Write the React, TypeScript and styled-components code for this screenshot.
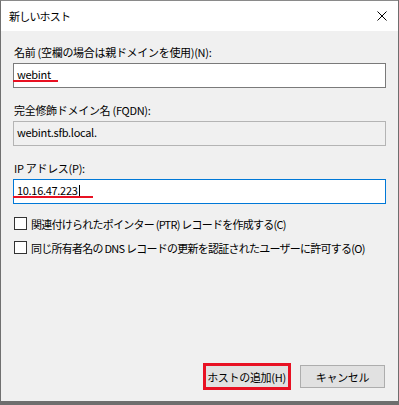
import React from "react";
import styled, { createGlobalStyle } from "styled-components";

const GlobalStyle = createGlobalStyle`
  html, body {
    margin: 0;
    padding: 0;
    background: #6e6e6e;
  }
  body {
    font-family: "Noto Sans CJK JP", "Noto Sans", sans-serif;
    font-size: 11px;
    letter-spacing: -0.3px;
    color: #000;
  }
`;

const Window = styled.div`
  box-sizing: border-box;
  width: 398px;
  height: 401px;
  border-left: 1px solid #707070;
  border-top: 1px solid #8a8a8a;
  display: flex;
  flex-direction: column;
  background: #f0f0f0;
`;

const TitleBar = styled.div`
  height: 30px;
  background: #fff;
  display: flex;
  align-items: center;
  justify-content: space-between;
  padding: 0 11px 0 8px;
  flex-shrink: 0;
`;

const Title = styled.span`
  font-size: 11px;
  letter-spacing: -0.8px;
  line-height: 16px;
`;

const Body = styled.div`
  flex: 1;
  display: flex;
  flex-direction: column;
  padding: 13px 12px 13px 12px;
`;

const Label = styled.div`
  line-height: 16px;
  height: 16px;
  padding-left: 1px;
  white-space: nowrap;
`;

const Field = styled.div<{ $variant?: "normal" | "readonly" | "focus"; $gap: number }>`
  position: relative;
  box-sizing: border-box;
  height: 25px;
  margin: 3px 0 ${(p) => p.$gap}px;
  border: 1px solid
    ${(p) =>
      p.$variant === "readonly" ? "#b4b4b4" : p.$variant === "focus" ? "#0078d7" : "#7a7a7a"};
  background: ${(p) => (p.$variant === "readonly" ? "#f0f0f0" : "#fff")};
  display: flex;
  align-items: center;
  padding: 0 0 3px 3px;
  white-space: nowrap;
`;

const Caret = styled.span`
  display: inline-block;
  width: 1px;
  height: 12px;
  background: #000;
  margin: 2px 0 0 1px;
`;

const RedLine = styled.div<{ $width: number }>`
  position: absolute;
  left: -1px;
  bottom: 5px;
  width: ${(p) => p.$width}px;
  height: 2px;
  background: #e81123;
`;

const CheckRow = styled.label<{ $gap: number }>`
  display: flex;
  align-items: center;
  gap: 4px;
  height: 13px;
  margin-bottom: ${(p) => p.$gap}px;
  padding-left: 1px;
  white-space: nowrap;
  letter-spacing: -0.75px;
`;

const Box = styled.span`
  box-sizing: border-box;
  width: 13px;
  height: 13px;
  border: 1px solid #333;
  background: #fff;
  flex-shrink: 0;
`;

const Buttons = styled.div`
  margin-top: auto;
  display: flex;
  justify-content: flex-end;
  gap: 11px;
  padding-right: 1px;
`;

const ButtonWrap = styled.div`
  position: relative;
`;

const Button = styled.button<{ $default?: boolean }>`
  box-sizing: border-box;
  width: 85px;
  height: 23px;
  font-family: inherit;
  font-size: 11px;
  letter-spacing: -0.3px;
  white-space: nowrap;
  color: #000;
  background: #e1e1e1;
  border: 1px solid ${(p) => (p.$default ? "#0078d7" : "#adadad")};
  padding: 0;
`;

const Highlight = styled.div`
  position: absolute;
  left: -1px;
  top: -2px;
  width: 88px;
  height: 27px;
  box-sizing: border-box;
  border: 3px solid #e81123;
  pointer-events: none;
`;

const CloseIcon = () => (
  <svg width="10" height="10" viewBox="0 0 10 10">
    <path d="M0.5 0.5 L9.5 9.5 M9.5 0.5 L0.5 9.5" stroke="#000" strokeWidth="1" />
  </svg>
);

export default function App() {
  return (
    <>
      <GlobalStyle />
      <Window>
        <TitleBar>
          <Title>新しいホスト</Title>
          <CloseIcon />
        </TitleBar>
        <Body>
          <Label>名前 (空欄の場合は親ドメインを使用)(N):</Label>
          <Field $gap={14}>
            webint
            <RedLine $width={45} />
          </Field>
          <Label>完全修飾ドメイン名 (FQDN):</Label>
          <Field $variant="readonly" $gap={14}>
            webint.sfb.local.
          </Field>
          <Label>IP アドレス(P):</Label>
          <Field $variant="focus" $gap={13}>
            10.16.47.223
            <Caret />
            <RedLine $width={80} />
          </Field>
          <CheckRow $gap={11}>
            <Box />
            関連付けられたポインター (PTR) レコードを作成する(C)
          </CheckRow>
          <CheckRow $gap={0}>
            <Box />
            同じ所有者名の DNS レコードの更新を認証されたユーザーに許可する(O)
          </CheckRow>
          <Buttons>
            <ButtonWrap>
              <Button $default>ホストの追加(H)</Button>
              <Highlight />
            </ButtonWrap>
            <Button>キャンセル</Button>
          </Buttons>
        </Body>
      </Window>
    </>
  );
}
